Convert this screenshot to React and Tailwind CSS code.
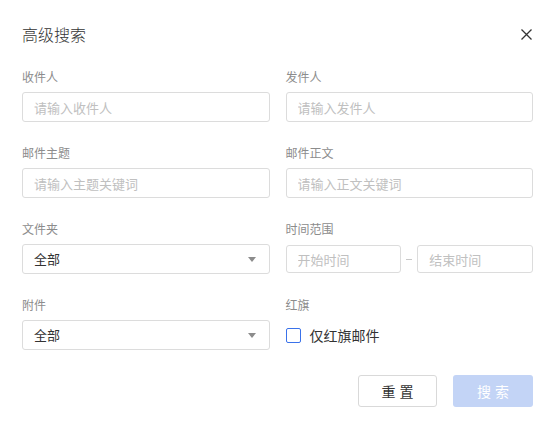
const Field = ({ label, children }) => (
  <div className="flex flex-col">
    <label className="mb-[6px] text-[12px] leading-[18px] text-[#8c8c8c]">{label}</label>
    {children}
  </div>
);

const TextInput = ({ placeholder }) => (
  <input
    type="text"
    placeholder={placeholder}
    className="h-[30px] w-full rounded-[3px] border border-[#dcdcdc] bg-white px-[11px] text-[13px] text-[#333] outline-none placeholder:text-[#c0c0c0]"
  />
);

const Select = ({ value }) => (
  <div className="flex h-[30px] w-full items-center justify-between rounded-[3px] border border-[#dcdcdc] bg-white pl-[11px] pr-[13px] text-[13px] text-[#333]">
    <span>{value}</span>
    <svg width="8" height="5" viewBox="0 0 8 5">
      <path d="M0 0 H8 L4 5 Z" fill="#8c8c8c" />
    </svg>
  </div>
);

export default function App() {
  return (
    <div className="h-[425px] w-[553px] bg-white pl-[22px] pr-[20px] pt-[22px] font-['Noto_Sans_CJK_SC',sans-serif]">
      {/* Header */}
      <div className="flex items-center justify-between">
        <h2 className="text-[16px] font-light leading-[24px] text-[#333]">高级搜索</h2>
        <button className="mr-[1px] flex h-[12px] w-[12px] items-center justify-center">
          <svg width="11" height="11" viewBox="0 0 11 11">
            <path d="M0.5 0.5 L10.5 10.5 M10.5 0.5 L0.5 10.5" stroke="#333" strokeWidth="1.3" />
          </svg>
        </button>
      </div>

      {/* Form */}
      <div className="mt-[22px] grid grid-cols-2 gap-x-4 gap-y-[22px]">
        <Field label="收件人">
          <TextInput placeholder="请输入收件人" />
        </Field>
        <Field label="发件人">
          <TextInput placeholder="请输入发件人" />
        </Field>
        <Field label="邮件主题">
          <TextInput placeholder="请输入主题关键词" />
        </Field>
        <Field label="邮件正文">
          <TextInput placeholder="请输入正文关键词" />
        </Field>
        <Field label="文件夹">
          <Select value="全部" />
        </Field>
        <Field label="时间范围">
          <div className="flex h-[30px] items-center">
            <input
              type="text"
              placeholder="开始时间"
              className="h-[28px] w-0 flex-1 rounded-[3px] border border-[#dcdcdc] px-[11px] text-[13px] outline-none placeholder:text-[#c0c0c0]"
            />
            <span className="mx-[5px] h-px w-[6px] bg-[#c8c8c8]" />
            <input
              type="text"
              placeholder="结束时间"
              className="h-[28px] w-0 flex-1 rounded-[3px] border border-[#dcdcdc] px-[11px] text-[13px] outline-none placeholder:text-[#c0c0c0]"
            />
          </div>
        </Field>
        <Field label="附件">
          <Select value="全部" />
        </Field>
        <Field label="红旗">
          <label className="flex h-[30px] items-center">
            <span className="h-[15px] w-[15px] rounded-[2px] border border-[#3a72ea] bg-white" />
            <span className="ml-[9px] text-[14px] text-[#333]">仅红旗邮件</span>
          </label>
        </Field>
      </div>

      {/* Footer */}
      <div className="mt-[25px] flex justify-end gap-4 pr-[-1px]">
        <button className="h-[32px] w-[79px] rounded-[3px] border border-[#d9d9d9] bg-white pl-[4px] text-[14px] tracking-[4px] text-[#333]">
          重置
        </button>
        <button className="h-[32px] w-[80px] rounded-[3px] bg-[#c3d4f6] pl-[4px] text-[14px] tracking-[4px] text-white">
          搜索
        </button>
      </div>
    </div>
  );
}
